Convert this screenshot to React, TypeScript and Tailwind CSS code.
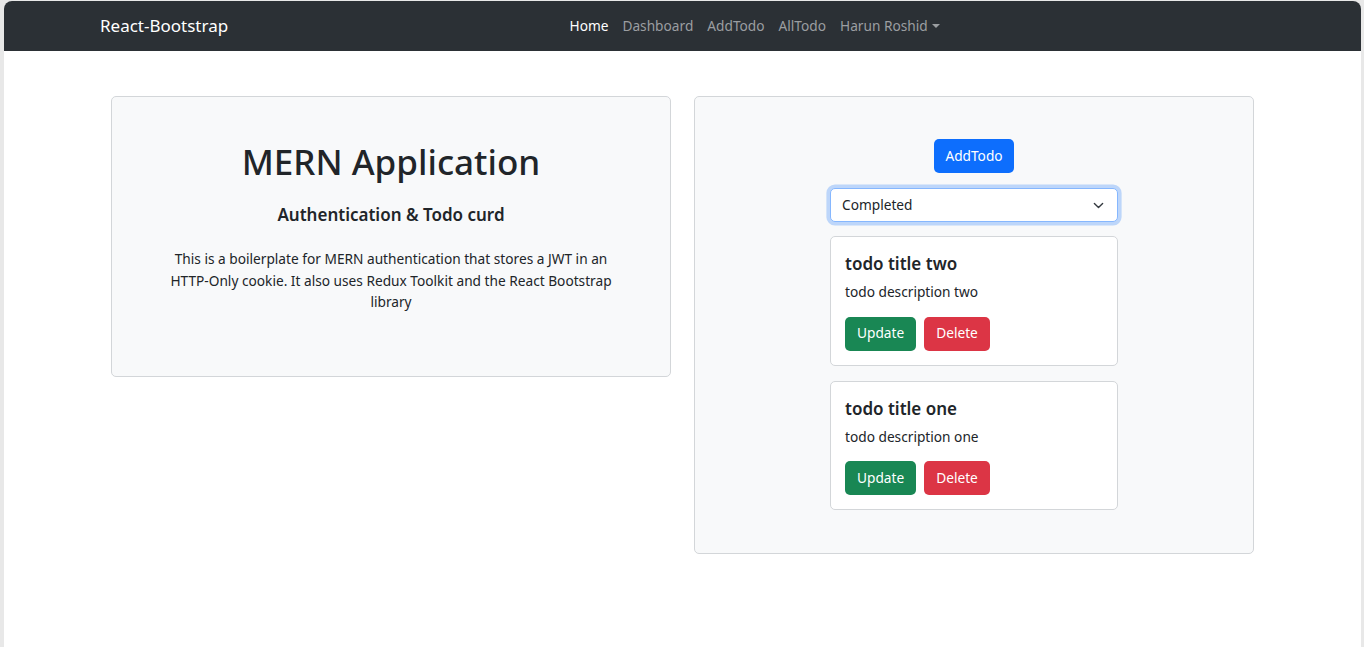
import React from 'react';

const todos = [
  { title: 'todo title two', description: 'todo description two' },
  { title: 'todo title one', description: 'todo description one' },
];

function TodoCard({ title, description }: { title: string; description: string }) {
  return (
    <div className="w-[288px] bg-white border border-[#d3d6d9] rounded-[5px] px-[14px] pt-[16px] pb-[14px] mb-[15px]">
      <h5 className="text-[17px] leading-[22px] font-semibold text-[#212529] mb-[6px]">{title}</h5>
      <p className="text-[13.7px] leading-[21.6px] text-[#212529] mb-[14px]">{description}</p>
      <div className="flex gap-[8px]">
        <button className="h-[34px] px-[12px] rounded-[5px] bg-[#198754] text-white text-[13.7px]">Update</button>
        <button className="h-[34px] px-[12px] rounded-[5px] bg-[#dc3545] text-white text-[13.7px]">Delete</button>
      </div>
    </div>
  );
}

export default function App() {
  const links = ['Dashboard', 'AddTodo', 'AllTodo'];

  return (
    <div className="min-h-[647px] bg-[#e8e8e8] pt-[1px] pl-[4px] pr-[3px] font-['Noto_Sans',sans-serif] text-[#212529]">
      <div className="min-h-[646px] bg-white rounded-t-[8px] overflow-hidden">
        {/* Navbar */}
        <nav className="h-[50px] bg-[#2b3035]">
          <div className="w-[1165px] mx-auto h-full flex items-center">
            <a className="text-[17px] text-white mr-[16px]">React-Bootstrap</a>
            <div className="mx-auto flex items-center text-[13.7px]">
              <a className="px-[7px] text-white">Home</a>
              {links.map((l) => (
                <a key={l} className="px-[7px] text-[#9b9ea1]">{l}</a>
              ))}
              <a className="px-[7px] text-[#9b9ea1] flex items-center">
                Harun Roshid
                <span className="ml-[4px] w-0 h-0 border-l-[4px] border-r-[4px] border-t-[4px] border-l-transparent border-r-transparent border-t-[#9b9ea1]" />
              </a>
            </div>
          </div>
        </nav>

        {/* Content */}
        <div className="w-[1143px] mx-auto mt-[45px] flex items-start gap-[23px]">
          <div className="w-[560px] bg-[#f8f9fa] border border-[#d3d6d9] rounded-[5px] px-[43px] pt-[43px] pb-[41px] flex flex-col items-center text-center">
            <h1 className="text-[35px] leading-[43px] font-medium mb-[21px]">MERN Application</h1>
            <h5 className="text-[17px] leading-[22px] font-semibold mb-[22px]">Authentication &amp; Todo curd</h5>
            <p className="text-[13.7px] leading-[21.6px] mb-[22px]">
              This is a boilerplate for MERN authentication that stores a JWT in an<br />
              HTTP-Only cookie. It also uses Redux Toolkit and the React Bootstrap<br />
              library
            </p>
          </div>

          <div className="w-[560px] bg-[#f8f9fa] border border-[#d3d6d9] rounded-[5px] pt-[42px] pb-[28px] flex flex-col items-center">
            <button className="h-[34px] px-[11px] rounded-[5px] bg-[#0d6efd] text-white text-[13.7px] mb-[15px]">AddTodo</button>
            <div className="relative w-[288px] mb-[14px]">
              <div className="h-[34px] bg-white border border-[#86b7fe] rounded-[5px] shadow-[0_0_0_3.6px_rgba(13,110,253,0.25)] flex items-center pl-[11px] text-[13.7px]">
                Completed
              </div>
              <svg className="absolute right-[14px] top-[12px]" width="11" height="11" viewBox="0 0 16 16" fill="none">
                <path d="m2 5 6 6 6-6" stroke="#343a40" strokeWidth="2" strokeLinecap="round" strokeLinejoin="round" />
              </svg>
            </div>
            {todos.map((t) => (
              <TodoCard key={t.title} title={t.title} description={t.description} />
            ))}
          </div>
        </div>
      </div>
    </div>
  );
}
